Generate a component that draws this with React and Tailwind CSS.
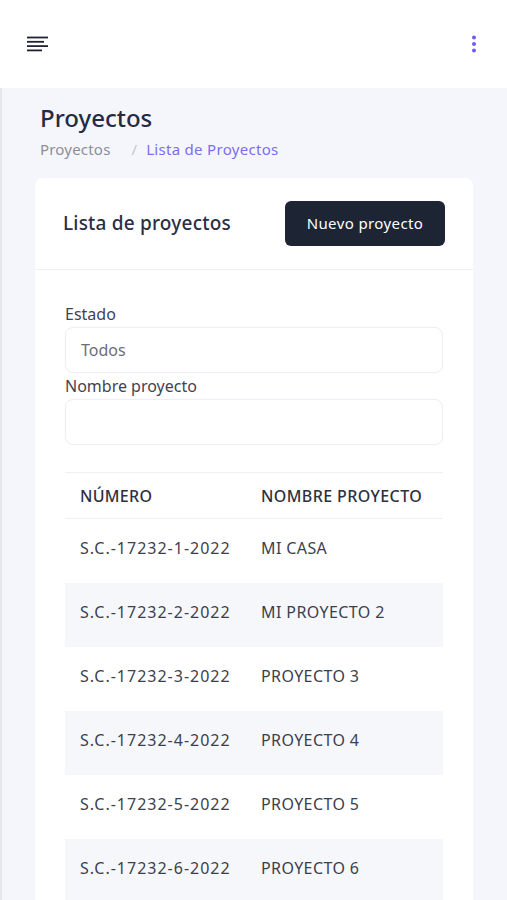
import React from 'react';

const rows = [
  { numero: 'S.C.-17232-1-2022', nombre: 'MI CASA' },
  { numero: 'S.C.-17232-2-2022', nombre: 'MI PROYECTO 2' },
  { numero: 'S.C.-17232-3-2022', nombre: 'PROYECTO 3' },
  { numero: 'S.C.-17232-4-2022', nombre: 'PROYECTO 4' },
  { numero: 'S.C.-17232-5-2022', nombre: 'PROYECTO 5' },
  { numero: 'S.C.-17232-6-2022', nombre: 'PROYECTO 6' },
];

const MenuIcon = () => (
  <svg width="22" height="16" viewBox="0 0 22 16" fill="none" stroke="#1f2230" strokeWidth="1.8">
    <line x1="0" y1="1.5" x2="21" y2="1.5" />
    <line x1="0" y1="5.8" x2="17" y2="5.8" />
    <line x1="0" y1="10.1" x2="21" y2="10.1" />
    <line x1="0" y1="14.4" x2="15" y2="14.4" />
  </svg>
);

const DotsIcon = () => (
  <svg width="6" height="18" viewBox="0 0 6 18" fill="#6c5cf0">
    <circle cx="3" cy="2.5" r="2" />
    <circle cx="3" cy="9" r="2" />
    <circle cx="3" cy="15.5" r="2" />
  </svg>
);

function App() {
  return (
    <div className="min-h-[900px] bg-[#f5f6fb] font-['Noto_Sans',sans-serif] text-[#2b2e45]">
      <header className="h-[88px] bg-white flex items-center justify-between pl-[27px] pr-[30px]">
        <MenuIcon />
        <DotsIcon />
      </header>

      <main className="border-l-2 border-[#e6e7ee] pl-[33px] pr-[34px] pt-[14px]">
        <div className="px-[5px]">
          <h1 className="text-[24px] leading-[32px] font-medium text-[#262a44]">Proyectos</h1>
          <nav className="mt-[4px] flex items-center text-[15px] leading-[22px]">
            <span className="text-[#8b8e99] tracking-[0.2px]">Proyectos</span>
            <span className="text-[#c3c5cd] ml-[21px] mr-[9px]">/</span>
            <span className="text-[#7c6df0] tracking-[0.3px]">Lista de Proyectos</span>
          </nav>
        </div>

        <div className="mt-[18px] bg-white rounded-t-[8px]">
          <div className="flex items-center justify-between pl-[28px] pr-[28px] py-[23px] border-b border-[#eef0f4]">
            <h2 className="text-[19px] font-medium text-[#2b2e45] tracking-[0.2px]">Lista de proyectos</h2>
            <button className="h-[45px] w-[160px] rounded-[6px] bg-[#1d2433] text-white text-[15px] tracking-[0.4px]">
              Nuevo proyecto
            </button>
          </div>

          <div className="px-[30px] pt-[32px] text-[16px]">
            <label className="block leading-[24px] text-[#3f4254]">Estado</label>
            <div className="mt-px h-[46px] rounded-[8px] border border-[#eceef3] flex items-center px-[15px] text-[#6b6e7a]">
              Todos
            </div>
            <label className="block mt-px leading-[24px] text-[#3f4254]">Nombre proyecto</label>
            <div className="mt-px h-[46px] rounded-[8px] border border-[#eceef3]" />

            <div className="mt-[27px] overflow-hidden">
              <table className="w-[420px] text-left whitespace-nowrap">
                <thead>
                  <tr className="h-[46px] border-t border-b border-[#eef0f4]">
                    <th className="w-[196px] pl-[15px] font-medium text-[#2d3040] tracking-[0.3px]">NÚMERO</th>
                    <th className="font-medium text-[#2d3040] tracking-[0.4px]">NOMBRE PROYECTO</th>
                  </tr>
                </thead>
                <tbody>
                  {rows.map((r, i) => (
                    <tr key={r.numero} className={`h-[64px] ${i % 2 === 1 ? 'bg-[#f6f7fb]' : 'bg-white'}`}>
                      <td className="pl-[15px] pb-[6px] text-[#3c3f4c] tracking-[1px]">{r.numero}</td>
                      <td className="pb-[6px] text-[#3c3f4c] tracking-[0.4px]">{r.nombre}</td>
                    </tr>
                  ))}
                </tbody>
              </table>
            </div>
          </div>
        </div>
      </main>
    </div>
  );
}

export default App;
